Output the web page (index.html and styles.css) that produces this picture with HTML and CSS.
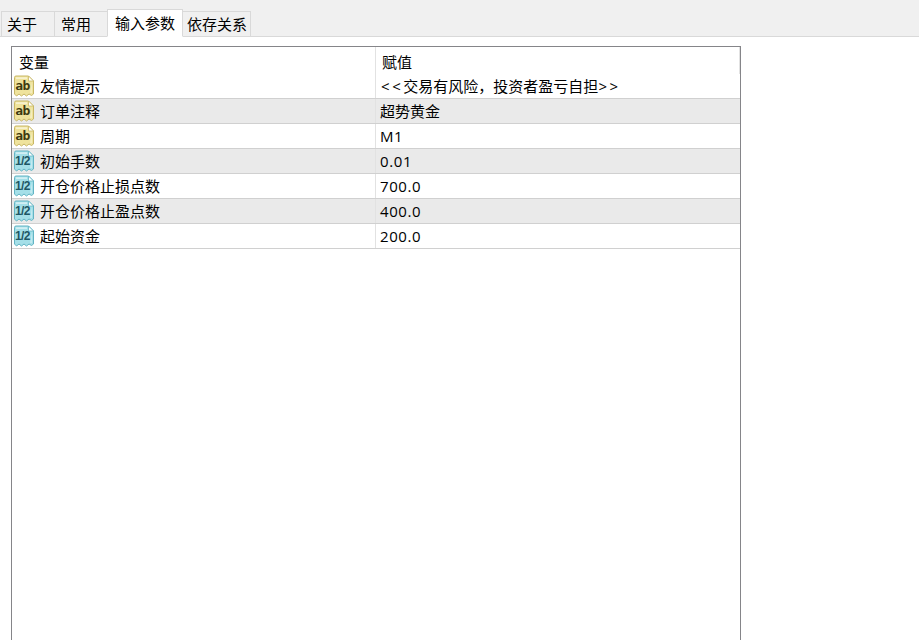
FILE: index.html
```html
<!DOCTYPE html>
<html lang="zh-CN">
<head>
<meta charset="utf-8">
<title>输入参数</title>
<link rel="stylesheet" href="styles.css">
</head>
<body>
<svg class="defs" width="0" height="0" aria-hidden="true">
  <defs>
    <symbol id="sheet" viewBox="0 0 22 22">
      <path d="M1.5 2.5Q1.5 1 3 1H15.5L20.5 6V19L18.5 20.5L16 19L13.5 21L11 19L8.5 21L6 19L3.5 21L1.5 19Z" fill="currentColor" stroke="var(--edge)" stroke-width="1"/>
      <path d="M15.5 1V6H20.5Z" fill="#fff" stroke="var(--edge)" stroke-width=".8"/>
      <path d="M3 2.2H14V4H3Z" fill="#fff" opacity=".5"/>
      <path d="M19 7V18L17 18Z" fill="#fff" opacity=".35"/>
    </symbol>
  </defs>
</svg>
<nav class="tabs">
  <div class="tab t1">关于</div>
  <div class="tab t2">常用</div>
  <div class="tab active">输入参数</div>
  <div class="tab t4">依存关系</div>
</nav>
<main class="content">
  <section class="grid">
    <header class="row head">
      <div class="c1 hname">变量</div>
      <div class="c2 hval">赋值</div>
    </header>
    <div class="row"><div class="c1"><span class="ico str"><svg><use href="#sheet"/></svg><b>ab</b></span>友情提示</div><div class="c2 wide"><span class="sp">&lt;&lt;</span>交易有风险，投资者盈亏自担<span class="sp">&gt;&gt;</span></div></div>
    <div class="row alt"><div class="c1"><span class="ico str"><svg><use href="#sheet"/></svg><b>ab</b></span>订单注释</div><div class="c2">超势黄金</div></div>
    <div class="row"><div class="c1"><span class="ico str"><svg><use href="#sheet"/></svg><b>ab</b></span>周期</div><div class="c2 latin">M1</div></div>
    <div class="row alt"><div class="c1"><span class="ico num"><svg><use href="#sheet"/></svg><b>1/2</b></span>初始手数</div><div class="c2 latin">0.01</div></div>
    <div class="row"><div class="c1"><span class="ico num"><svg><use href="#sheet"/></svg><b>1/2</b></span>开仓价格止损点数</div><div class="c2 latin">700.0</div></div>
    <div class="row alt"><div class="c1"><span class="ico num"><svg><use href="#sheet"/></svg><b>1/2</b></span>开仓价格止盈点数</div><div class="c2 latin">400.0</div></div>
    <div class="row"><div class="c1"><span class="ico num"><svg><use href="#sheet"/></svg><b>1/2</b></span>起始资金</div><div class="c2 latin">200.0</div></div>
  </section>
</main>
</body>
</html>
```
FILE: styles.css
```css
* { box-sizing: border-box; }
html, body { margin: 0; height: 100%; overflow: hidden; background: #fff; }
body {
  display: flex;
  flex-direction: column;
  font-family: "Open Sans", "Noto Sans CJK SC", sans-serif;
  font-size: 15px;
  color: #000;
}
.defs { position: absolute; }
.tabs {
  height: 37px;
  flex: none;
  background: #f0f0f0;
  border-bottom: 1px solid #d9d9d9;
  display: flex;
  align-items: flex-end;
  padding-left: 1px;
}
.tab {
  height: 26px;
  margin-bottom: -1px;
  background: #f0f0f0;
  border: 1px solid #d9d9d9;
  margin-right: -1px;
  display: flex;
  align-items: center;
  line-height: 24px;
}
.t1 { width: 54px; padding-left: 5px; }
.t2 { width: 54px; padding-left: 6px; }
.t4 { width: 69px; padding-left: 4px; }
.active {
  width: 76px;
  height: 28px;
  padding-left: 7px;
  background: #fff;
  border-bottom-color: #fff;
  position: relative;
  z-index: 1;
}
.content { flex: 1; min-height: 0; padding: 9px 0 0 11px; }
.grid {
  width: 730px;
  height: 100%;
  border: 1px solid #858589;
  border-bottom: 0;
}
.row {
  display: flex;
  height: 25px;
  border-bottom: 1px solid #d0d0d0;
}
.row.alt { background: #eaeaea; }
.head { height: 27px; border-bottom: 0; }
.c1 {
  width: 364px;
  flex: none;
  display: flex;
  align-items: center;
  gap: 5px;
  padding-left: 1px;
  border-right: 1px solid #e2e2e2;
  line-height: 24px;
}
.c2 {
  flex: 1;
  display: flex;
  align-items: center;
  padding-left: 4px;
  line-height: 24px;
}
.latin { letter-spacing: .6px; }
.wide { padding-left: 5px; }
.sp { letter-spacing: 2.6px; }
.head .c1, .head .c2 { padding-top: 2px; }
.hname { padding-left: 7px; }
.hval { padding-left: 6px; border-right: 1px solid #e2e2e2; }
.ico {
  position: relative;
  width: 22px;
  height: 22px;
  flex: none;
}
.ico svg { width: 22px; height: 22px; display: block; }
.ico b {
  position: absolute;
  left: 2px;
  top: 2px;
  width: 15px;
  text-align: center;
  font: 700 13px/18px "DejaVu Sans Mono", monospace;
  letter-spacing: -.5px;
  color: #3d3a10;
}
.str { color: #efe39c; --edge: #c8b766; }
.num { color: #a4dfe8; --edge: #62b4c4; }
.num b { color: #1d5664; font: 700 12px/18px "Liberation Sans", sans-serif; letter-spacing: -.6px; }
```
